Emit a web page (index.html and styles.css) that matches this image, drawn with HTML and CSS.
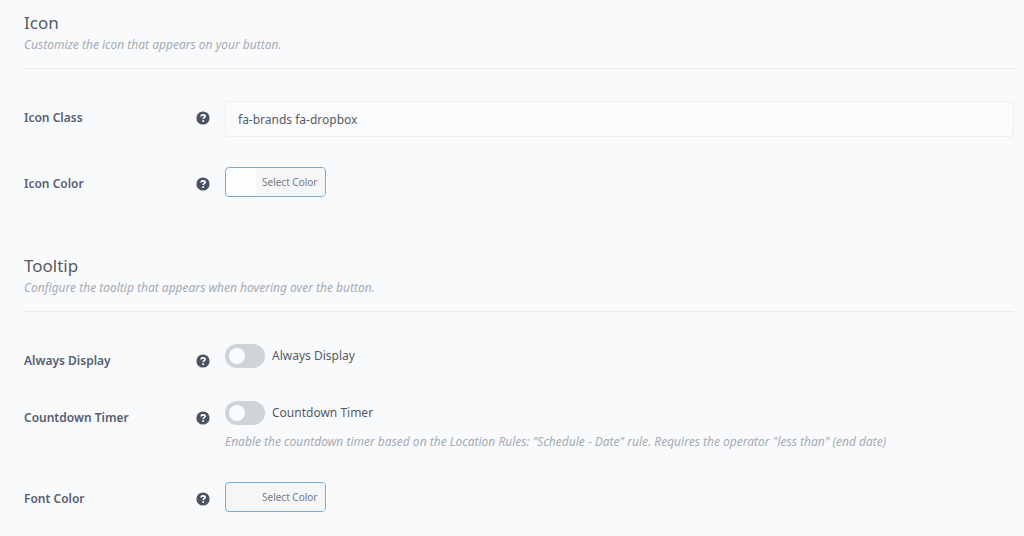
FILE: index.html
```html
<!DOCTYPE html>
<html lang="en">
<head>
    <meta charset="UTF-8">
    <meta name="viewport" content="width=device-width, initial-scale=1.0">
    <title>Button Settings</title>
    <link rel="stylesheet" href="styles.css">
</head>
<body>
    <svg class="sprite" aria-hidden="true">
        <symbol id="help" viewBox="0 0 14 14">
            <circle cx="7" cy="7" r="6.6" fill="#4a5362"/>
            <path d="M5 5.5C5.1 4.4 5.9 3.9 7 3.9c1.2 0 2.1.6 2.1 1.5C9.1 6.6 7.2 6.6 7.2 7.9" fill="none" stroke="#fff" stroke-width="1.7"/>
            <circle cx="7.2" cy="9.9" r="1" fill="#fff"/>
        </symbol>
    </svg>

    <form class="settings">
        <section>
            <header>
                <h2>Icon</h2>
                <p class="description">Customize the icon that appears on your button.</p>
            </header>
            <div class="field">
                <div class="title">
                    <label for="icon-class">Icon Class</label>
                    <svg class="help"><use href="#help"/></svg>
                </div>
                <input type="text" class="text" id="icon-class" value="fa-brands fa-dropbox">
            </div>
            <div class="field">
                <div class="title">
                    <label for="icon-color">Icon Color</label>
                    <svg class="help"><use href="#help"/></svg>
                </div>
                <div>
                    <button type="button" class="color white" id="icon-color"><span>Select Color</span></button>
                </div>
            </div>
        </section>

        <section>
            <header>
                <h2>Tooltip</h2>
                <p class="description">Configure the tooltip that appears when hovering over the button.</p>
            </header>
            <div class="field">
                <div class="title">
                    <label for="always-display">Always Display</label>
                    <svg class="help"><use href="#help"/></svg>
                </div>
                <label class="switch">
                    <input type="checkbox" id="always-display">
                    <span>Always Display</span>
                </label>
            </div>
            <div class="field">
                <div class="title">
                    <label for="countdown">Countdown Timer</label>
                    <svg class="help"><use href="#help"/></svg>
                </div>
                <div>
                    <label class="switch">
                        <input type="checkbox" id="countdown">
                        <span>Countdown Timer</span>
                    </label>
                    <p class="description note">Enable the countdown timer based on the Location Rules: "Schedule - Date" rule. Requires the operator "less than" (end date)</p>
                </div>
            </div>
            <div class="field">
                <div class="title">
                    <label for="font-color">Font Color</label>
                    <svg class="help"><use href="#help"/></svg>
                </div>
                <div>
                    <button type="button" class="color" id="font-color"><span>Select Color</span></button>
                </div>
            </div>
        </section>
    </form>
</body>
</html>
```
FILE: styles.css
```css
* {
    margin: 0;
    padding: 0;
    box-sizing: border-box;
}

body {
    font-family: "Noto Sans", "Open Sans", sans-serif;
    font-size: 12px;
    line-height: 20px;
    background-color: #f9fafc;
    color: #555b64;
}

.sprite {
    display: none;
}

.settings {
    display: flex;
    flex-direction: column;
    gap: 56px;
    padding: 10px 10px 24px 24px;
}

section {
    display: flex;
    flex-direction: column;
    gap: 30px;
}

header {
    padding-bottom: 13px;
    margin-bottom: 2px;
    border-bottom: 1px solid #e8eaed;
}

h2 {
    font-size: 17px;
    font-weight: 400;
    line-height: 25px;
}

.description {
    color: #a5abb5;
    font-style: italic;
}

.field {
    display: grid;
    grid-template-columns: 186px 1fr;
    column-gap: 15px;
    align-items: start;
}

.title {
    display: flex;
    justify-content: space-between;
    align-items: center;
    padding-top: 7px;
    font-weight: 600;
    color: #566070;
}

.help {
    width: 14px;
    height: 14px;
}

.text {
    width: 100%;
    height: 36px;
    padding: 0 12px;
    border: 1px solid #eceef0;
    border-radius: 4px;
    background-color: #fafbfc;
    color: inherit;
    font: inherit;
}

.color {
    display: block;
    height: 30px;
    padding-left: 30px;
    border: 1px solid #78aad2;
    border-radius: 4px;
    background-color: #f5f6f8;
    color: #777c84;
    font-family: inherit;
    font-size: 10px;
    cursor: pointer;
}

.color.white {
    background-color: #fcfdfe;
}

.color span {
    display: block;
    padding: 0 7px 0 6px;
    line-height: 28px;
    background-color: #f5f6f8;
    border-radius: 0 3px 3px 0;
}

.switch {
    display: flex;
    align-items: center;
    gap: 7px;
    height: 24px;
    width: fit-content;
}

.switch input {
    appearance: none;
    width: 40px;
    height: 24px;
    padding: 4px;
    border-radius: 12px;
    background-color: #d0d3d8;
    cursor: pointer;
}

.switch input::before {
    content: "";
    display: block;
    width: 16px;
    height: 16px;
    border-radius: 50%;
    background-color: #fbfcfd;
}

.switch input:checked {
    background-color: #78aad2;
}

.switch input:checked::before {
    margin-left: auto;
}

.note {
    margin-top: 7px;
}
```
